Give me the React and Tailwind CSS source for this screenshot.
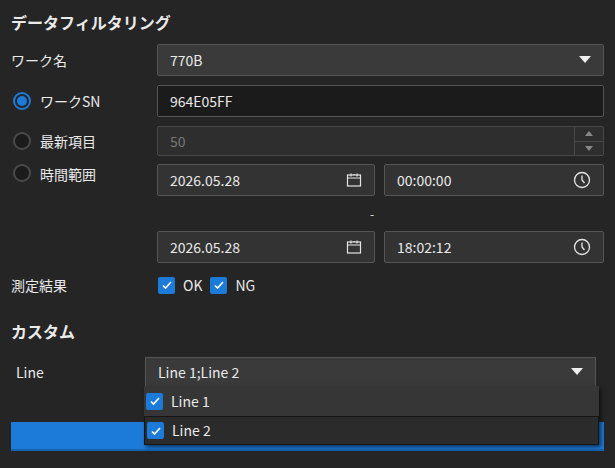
import React from 'react';

const Cal = () => (
  <svg width="16" height="16" viewBox="0 0 16 16" fill="none" stroke="#e5e5e5" strokeWidth="1.2">
    <rect x="1.5" y="3" width="13" height="11" />
    <path d="M1.5 6h13M5 1.5v3M11 1.5v3M8 2v1" />
  </svg>
);
const Clock = () => (
  <svg width="18" height="18" viewBox="0 0 18 18" fill="none" stroke="#e5e5e5" strokeWidth="1.3">
    <circle cx="9" cy="9" r="7.5" />
    <path d="M9 4.5V9l2.5 3" />
  </svg>
);
const Caret = () => (
  <svg width="12" height="8" viewBox="0 0 12 8"><path d="M0 0h12L6 7z" fill="#f0f0f0" /></svg>
);
const Check = () => (
  <span className="w-[17px] h-[17px] bg-[#1c7ad9] rounded-[2px] flex items-center justify-center">
    <svg width="12" height="12" viewBox="0 0 12 12" fill="none" stroke="white" strokeWidth="1.6"><path d="M2 6.5l2.5 2.5L10 3" /></svg>
  </span>
);
const Radio = ({ on }) => (
  <span className={`w-[18px] h-[18px] rounded-full border-2 flex items-center justify-center ${on ? 'border-[#1c7ad9]' : 'border-[#4a4a4a] bg-[#1b1b1b]'}`}>
    {on && <span className="w-[10px] h-[10px] rounded-full bg-[#1c7ad9]" />}
  </span>
);

const box = 'h-[32px] border border-[#555] rounded-[2px] flex items-center px-3 text-[14px]';

const App = () => (
  <div className="w-[615px] h-[468px] bg-[#252525] text-[#eaeaea] relative overflow-hidden" style={{ fontFamily: '"Noto Sans CJK JP", "Noto Sans", sans-serif' }}>
    <div className="px-[11px] pt-[8px]">
      <h1 className="text-[16px] font-bold h-[28px] leading-[28px]">データフィルタリング</h1>
      <div className="mt-[8px] flex items-center h-[32px]">
        <span className="w-[147px] text-[14px]">ワーク名</span>
        <div className={`${box} flex-1 bg-[#3a3a3a] justify-between ml-[-1px]`}><span>770B</span><Caret /></div>
      </div>
      <div className="mt-[9px] flex items-center h-[32px]">
        <span className="w-[147px] flex items-center gap-[9px] text-[14px] pl-[2px]"><Radio on />ワークSN</span>
        <div className={`${box} flex-1 bg-[#1b1b1b] ml-[-1px]`}>964E05FF</div>
      </div>
      <div className="mt-[9px] flex items-center h-[30px]">
        <span className="w-[147px] flex items-center gap-[9px] text-[14px] pl-[2px]"><Radio />最新項目</span>
        <div className="flex-1 h-[30px] border border-[#484848] rounded-[2px] bg-[#2e2e2e] flex ml-[-1px]">
          <span className="flex-1 px-3 text-[14px] text-[#777] flex items-center">50</span>
          <div className="w-[29px] border-l border-[#484848] flex flex-col">
            <span className="flex-1 flex items-center justify-center border-b border-[#484848]"><svg width="8" height="5"><path d="M0 5h8L4 0z" fill="#888" /></svg></span>
            <span className="flex-1 flex items-center justify-center"><svg width="8" height="5"><path d="M0 0h8L4 5z" fill="#888" /></svg></span>
          </div>
        </div>
      </div>
      <div className="mt-[8px] flex">
        <span className="w-[147px] flex items-start gap-[9px] text-[14px] pl-[2px] pt-[-2px] h-[20px]"><Radio />時間範囲</span>
        <div className="flex-1 ml-[-1px]">
          <div className="flex gap-[9px]">
            <div className={`${box} w-[218px] bg-[#333] justify-between`}>2026.05.28<Cal /></div>
            <div className={`${box} flex-1 bg-[#333] justify-between`}>00:00:00<Clock /></div>
          </div>
          <div className="h-[35px] flex items-center pl-[213px] text-[12px]">-</div>
          <div className="flex gap-[9px]">
            <div className={`${box} w-[218px] bg-[#333] justify-between`}>2026.05.28<Cal /></div>
            <div className={`${box} flex-1 bg-[#333] justify-between`}>18:02:12<Clock /></div>
          </div>
        </div>
      </div>
      <div className="mt-[12px] flex items-center h-[20px] text-[14px]">
        <span className="w-[147px]">測定結果</span>
        <span className="flex items-center gap-[8px]"><Check />OK</span>
        <span className="flex items-center gap-[8px] ml-[8px]"><Check />NG</span>
      </div>
      <h2 className="mt-[24px] text-[16px] font-bold h-[24px] leading-[24px]">カスタム</h2>
      <div className="mt-[14px] flex items-center h-[30px] text-[14px]">
        <span className="w-[134px] pl-[5px]">Line</span>
        <div className="w-[451px] h-[30px] bg-[#3a3a3a] border border-[#555] flex items-center justify-between px-3">Line 1;Line 2<Caret /></div>
      </div>
      <div className="mt-[35px] h-[29px] bg-[#1c7ad9] border-b-2 border-[#1663b0]" />
    </div>
    <div className="absolute left-[144px] top-[386px] w-[455px] bg-[#2b2b2b] shadow-[2px_2px_4px_rgba(0,0,0,0.6)] text-[14px]">
      <div className="h-[30px] bg-[#363636] flex items-center gap-[8px] px-[2px]"><Check />Line 1</div>
      <div className="h-[29px] border border-[#151515] flex items-center gap-[8px] px-[2px]"><Check />Line 2</div>
    </div>
  </div>
);

export default App;
